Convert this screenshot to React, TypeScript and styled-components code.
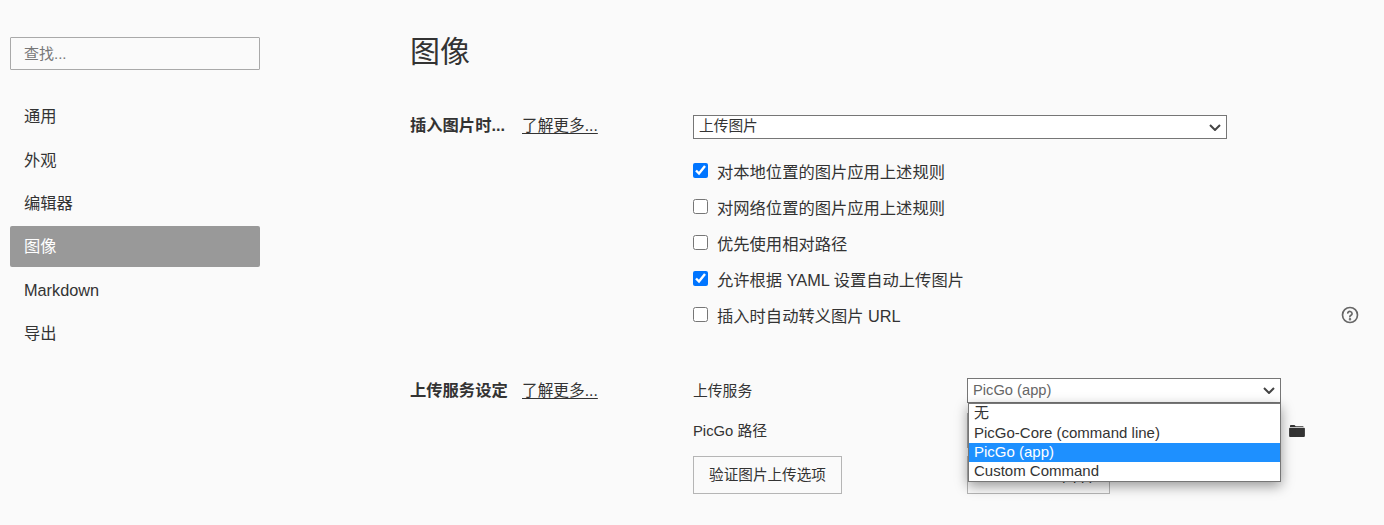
import React from 'react';
import styled, { createGlobalStyle } from 'styled-components';

const Global = createGlobalStyle`
  html, body { margin: 0; padding: 0; height: 100%; background: #fafafa; overflow: hidden; }
  body { font-family: "Liberation Sans", "Noto Sans CJK SC", sans-serif; color: #333; }
`;

const Page = styled.div`
  display: flex;
  width: 1384px;
  height: 525px;
  overflow: hidden;
  background: #fafafa;
`;

const Sidebar = styled.aside`
  width: 250px;
  margin-left: 10px;
  padding-top: 37px;
  flex: none;
`;

const Search = styled.input`
  display: block;
  box-sizing: border-box;
  width: 250px;
  height: 33px;
  padding: 0 13px;
  border: 1px solid #a9a9a9;
  border-radius: 1px;
  background: transparent;
  font: 15px "Liberation Sans", "Noto Sans CJK SC", sans-serif;
  outline: none;
  &::placeholder { color: #777; opacity: 1; }
`;

const Nav = styled.nav`
  display: flex;
  flex-direction: column;
  margin-top: 26.3px;
`;

const NavItem = styled.div<{ $active?: boolean }>`
  height: 41px;
  margin-bottom: 2.4px;
  padding-left: 14px;
  line-height: 41px;
  font-size: 16.3px;
  border-radius: 2px;
  color: ${p => (p.$active ? '#fff' : '#333')};
  background: ${p => (p.$active ? '#999' : 'transparent')};
`;

const Main = styled.main`
  flex: 1;
  padding-left: 150px;
  padding-top: 32px;
  min-width: 0;
`;

const Heading = styled.h1`
  margin: 0 0 43px;
  font-size: 30px;
  line-height: 40px;
  font-weight: 400;
  color: #333;
`;

const Section = styled.section`
  display: flex;
  align-items: flex-start;
  margin-bottom: 45px;
`;

const SectionHead = styled.div<{ $offset: number }>`
  width: 283px;
  flex: none;
  display: flex;
  gap: 14px;
  align-items: baseline;
  line-height: 24px;
  margin-top: ${p => p.$offset}px;
`;

const SectionTitle = styled.strong`
  font-size: 16.3px;
  font-weight: 700;
  min-width: 98px;
`;

const More = styled.a`
  font-size: 15.7px;
  color: #333;
  text-decoration: underline;
  text-underline-offset: 2px;
`;

const Body = styled.div`
  flex: 1;
  min-width: 0;
  position: relative;
`;

const SelectWrap = styled.div<{ $width: number }>`
  position: relative;
  width: ${p => p.$width}px;
  flex: none;
`;

const Select = styled.select<{ $height: number; $muted?: boolean }>`
  display: block;
  box-sizing: border-box;
  width: 100%;
  height: ${p => p.$height}px;
  padding: 0 0 2px 5px;
  appearance: none;
  background: #fff;
  border: 1px solid #767676;
  border-radius: 0;
  font: 14.7px "Liberation Sans", "Noto Sans CJK SC", sans-serif;
  color: ${p => (p.$muted ? '#666' : '#333')};
  outline: none;
`;

const Chevron = styled.svg`
  position: absolute;
  right: 6px;
  top: 50%;
  margin-top: -3.5px;
  pointer-events: none;
`;

const Checks = styled.div`
  display: flex;
  flex-direction: column;
  margin-top: 14px;
  margin-right: 25px;
`;

const CheckRow = styled.label`
  display: flex;
  align-items: center;
  height: 36px;
  font-size: 16.3px;
  position: relative;
`;

const Box = styled.input`
  width: 15px;
  height: 15px;
  margin: 0 9px 2px 0;
  flex: none;
`;

const Help = styled.svg`
  position: absolute;
  right: 0;
  top: 9px;
`;

const FieldRow = styled.div<{ $height: number; $top?: number }>`
  display: flex;
  align-items: center;
  height: ${p => p.$height}px;
  margin-top: ${p => p.$top ?? 0}px;
  font-size: 14.8px;
`;

const FieldLabel = styled.div`
  width: 274px;
  flex: none;
  margin-bottom: 2px;
`;

const PathInput = styled.input`
  box-sizing: border-box;
  width: 314px;
  height: 35px;
  border: 1px solid #a9a9a9;
  background: #fff;
  outline: none;
`;

const Folder = styled.svg`
  margin-left: 8px;
`;

const Buttons = styled.div`
  display: flex;
  margin-top: 8px;
`;

const Button = styled.button<{ $width: number; $gap?: number }>`
  box-sizing: border-box;
  width: ${p => p.$width}px;
  height: 38px;
  margin-right: ${p => p.$gap ?? 0}px;
  border: 1px solid #b5b5b5;
  background: transparent;
  font: 14.6px "Liberation Sans", "Noto Sans CJK SC", sans-serif;
  color: #333;
  padding: 0 0 3px;
  flex: none;
`;

const Menu = styled.div`
  position: absolute;
  left: 275px;
  top: 25px;
  box-sizing: border-box;
  width: 313px;
  background: #fff;
  border: 1px solid #767676;
  box-shadow: 0 4px 12px rgba(0, 0, 0, 0.4);
  z-index: 2;
`;

const Option = styled.div<{ $selected?: boolean }>`
  height: 19px;
  line-height: 17px;
  padding-left: 5px;
  font-size: 15px;
  color: ${p => (p.$selected ? '#fff' : '#333')};
  background: ${p => (p.$selected ? '#1e90ff' : 'transparent')};
  &:first-child { height: 20px; line-height: 18px; }
`;

const navItems = ['通用', '外观', '编辑器', '图像', 'Markdown', '导出'];
const checks: [string, boolean][] = [
  ['对本地位置的图片应用上述规则', true],
  ['对网络位置的图片应用上述规则', false],
  ['优先使用相对路径', false],
  ['允许根据 YAML 设置自动上传图片', true],
  ['插入时自动转义图片 URL', false],
];
const options = ['无', 'PicGo-Core (command line)', 'PicGo (app)', 'Custom Command'];

const Caret = () => (
  <Chevron width="12" height="7" viewBox="0 0 12 7" fill="none" stroke="#444" strokeWidth="2">
    <path d="M1 1l5 5 5-5" />
  </Chevron>
);

export default function App() {
  return (
    <Page>
      <Global />
      <Sidebar>
        <Search placeholder="查找..." />
        <Nav>
          {navItems.map(n => (
            <NavItem key={n} $active={n === '图像'}>{n}</NavItem>
          ))}
        </Nav>
      </Sidebar>
      <Main>
        <Heading>图像</Heading>
        <Section>
          <SectionHead $offset={-2}>
            <SectionTitle>插入图片时...</SectionTitle>
            <More>了解更多...</More>
          </SectionHead>
          <Body>
            <SelectWrap $width={534}>
              <Select $height={24} defaultValue="a">
                <option value="a">上传图片</option>
              </Select>
              <Caret />
            </SelectWrap>
            <Checks>
              {checks.map(([t, c], i) => (
                <CheckRow key={t}>
                  <Box type="checkbox" defaultChecked={c} />
                  {t}
                  {i === 4 && (
                    <Help width="18" height="18" viewBox="0 0 24 24" fill="none" stroke="#666" strokeWidth="2.2" strokeLinecap="round">
                      <circle cx="12" cy="12" r="10" />
                      <path d="M9 9.2a3 3 0 0 1 5.8 1c0 2-3 2.3-3 4.2" />
                      <circle cx="12" cy="17.6" r="0.6" fill="#666" />
                    </Help>
                  )}
                </CheckRow>
              ))}
            </Checks>
          </Body>
        </Section>
        <Section>
          <SectionHead $offset={0}>
            <SectionTitle>上传服务设定</SectionTitle>
            <More>了解更多...</More>
          </SectionHead>
          <Body>
            <FieldRow $height={25}>
              <FieldLabel>上传服务</FieldLabel>
              <SelectWrap $width={314}>
                <Select $height={25} $muted defaultValue="a">
                  <option value="a">PicGo (app)</option>
                </Select>
                <Caret />
              </SelectWrap>
            </FieldRow>
            <FieldRow $height={35} $top={10}>
              <FieldLabel>PicGo 路径</FieldLabel>
              <PathInput />
              <Folder width="16" height="12" viewBox="0 0 16 12">
                <path fill="#333" d="M1.8 0h3.7l1.2 1.2h7.2c.4 0 .7.3.7.7V2H1V.8c0-.4.4-.8.8-.8z" />
                <path fill="#333" d="M1 2.7h14c.5 0 .9.4.9.9v7.5c0 .5-.4.9-.9.9H1c-.5 0-.9-.4-.9-.9V3.6c0-.5.4-.9.9-.9z" />
              </Folder>
            </FieldRow>
            <Buttons>
              <Button $width={149} $gap={125}>验证图片上传选项</Button>
              <Button $width={143}>下载 PicGo (app)</Button>
            </Buttons>
            <Menu>
              {options.map(o => (
                <Option key={o} $selected={o === 'PicGo (app)'}>{o}</Option>
              ))}
            </Menu>
          </Body>
        </Section>
      </Main>
    </Page>
  );
}
